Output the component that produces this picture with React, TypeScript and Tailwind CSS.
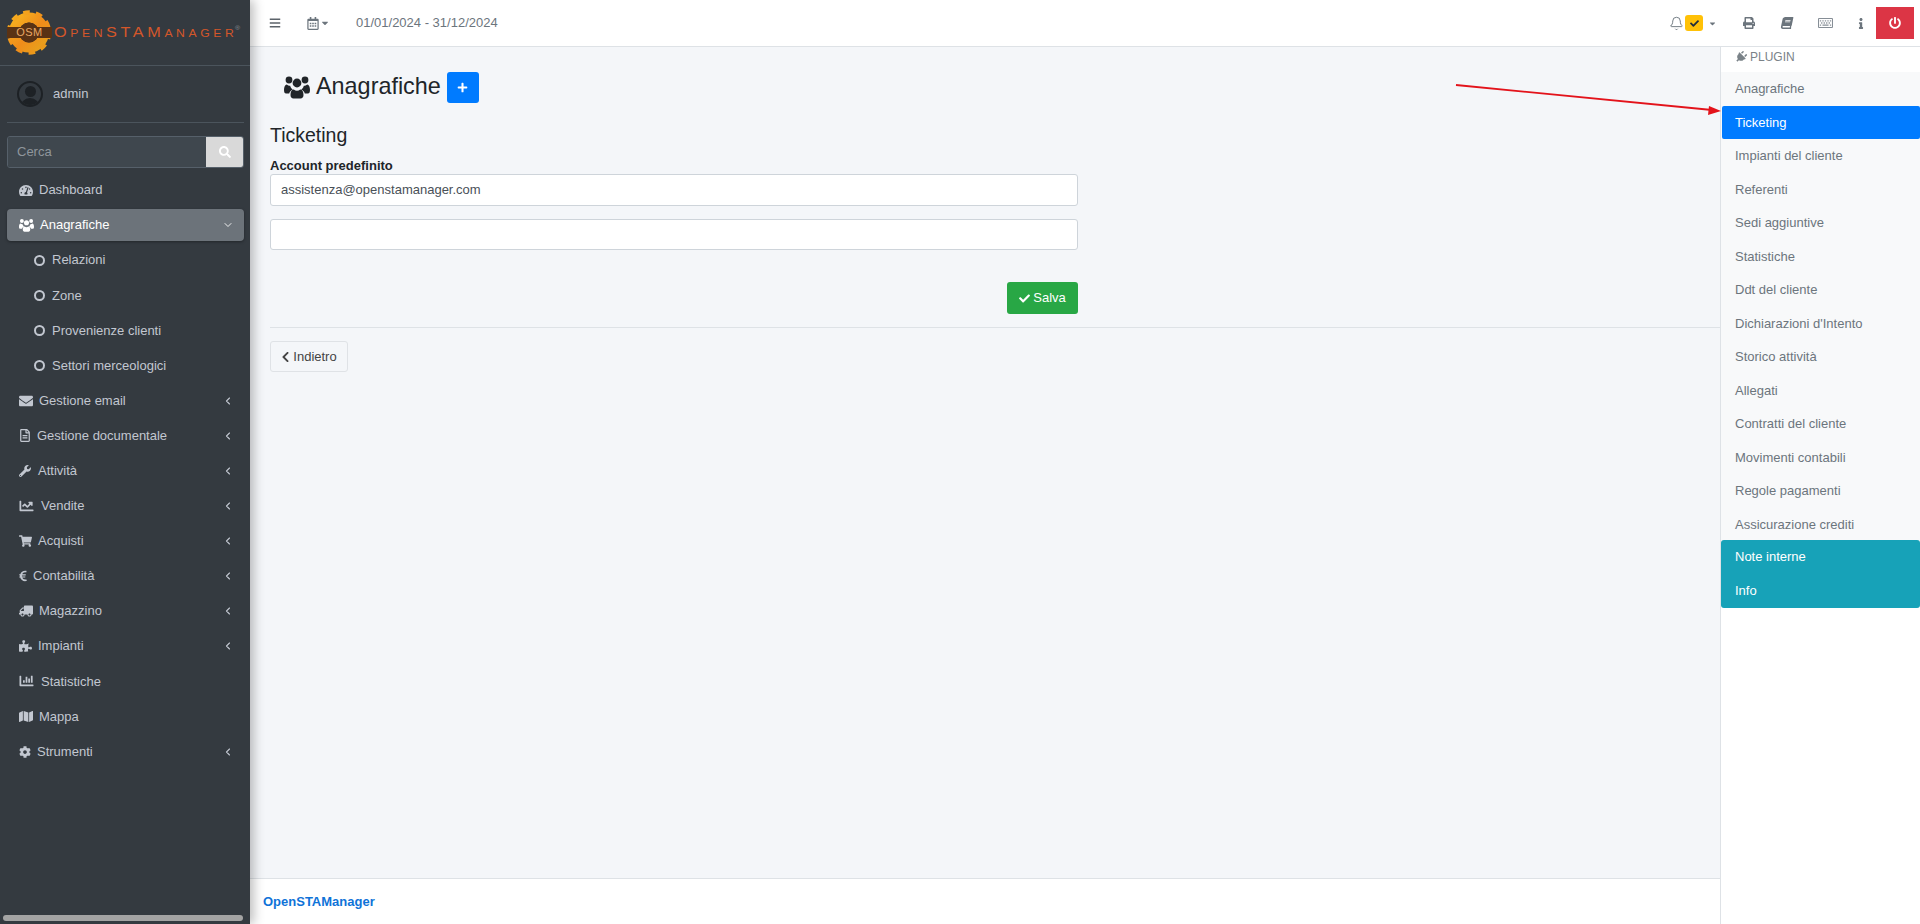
import {
  FaBars, FaBook, FaCaretDown, FaChartBar, FaChartLine, FaCheck, FaChevronLeft, FaCog, FaEnvelope, FaEuroSign,
  FaInfo, FaMap, FaPlug, FaPlus, FaPowerOff, FaPrint, FaPuzzlePiece, FaRegCalendarAlt, FaRegFileAlt,
  FaRegKeyboard, FaSearch, FaShoppingCart, FaTachometerAlt, FaTruck, FaWrench,
} from "react-icons/fa"
import { Bell, ChevronDown, ChevronLeft } from "lucide-react"

const UsersIcon = ({ className }: { className?: string }) => (
  <svg viewBox="0 0 26 24" className={className} fill="currentColor">
    <circle cx="5" cy="5" r="3.4" />
    <circle cx="21" cy="5" r="3.4" />
    <circle cx="13" cy="8" r="4.4" />
    <path d="M0 15c0-3 1-5.5 2.8-5.5.9.9 2 1.3 3.4 1.3.4 1.7 1.300 3 2.500 3.800C7 15.500 5.600 16.800 5.200 18.500H2C.8 18.500 0 17.500 0 15ZM26 15c0-3-1-5.500-2.800-5.500-.9.9-2 1.300-3.400 1.300-.4 1.700-1.300 3-2.500 3.800 1.700.9 3.100 2.200 3.500 3.900H24c1.200 0 2-1 2-3.500Z" />
    <path d="M6.500 20c0-3.500 1.200-5.500 3.300-5.500 1 .8 2 1.200 3.200 1.200s2.200-.4 3.200-1.200c2.100 0 3.300 2 3.300 5.500 0 2.200-1.200 3.500-3 3.500H9.500c-1.800 0-3-1.300-3-3.500Z" />
  </svg>
)

const Logo = () => (
  <div className="h-[66px] border-b border-[#4b545c] flex items-center pl-[7px] shrink-0">
    <div className="relative w-[45px] h-[45px] shrink-0">
      <svg viewBox="0 0 45 45" className="w-[45px] h-[45px]">
        <defs>
          <linearGradient id="gearFill" x1="0" y1="0" x2="1" y2="1">
            <stop offset="0" stopColor="#f7b11f" />
            <stop offset="0.55" stopColor="#f08c1a" />
            <stop offset="1" stopColor="#e8a21c" />
          </linearGradient>
        </defs>
        <circle cx="22" cy="22.500" r="15" fill="none" stroke="url(#gearFill)" strokeWidth="10" />
        <circle cx="22" cy="22.500" r="20" fill="none" stroke="url(#gearFill)" strokeWidth="4.500" strokeDasharray="6.500 6.060" />
        <circle cx="22" cy="22.500" r="10" fill="#5a3214" />
        <rect x="0" y="17" width="45" height="11" fill="#5a3214" />
      </svg>
      <span className="absolute inset-0 flex items-center justify-center text-[11px] leading-none tracking-[0.5px] text-[#e9a866]">OSM</span>
    </div>
    <div className="flex items-baseline text-[#d4572a] tracking-[3.100px] leading-none ml-[2px] pb-[1px] whitespace-nowrap origin-left scale-x-[1.16]">
      <span className="text-[14px]">O</span>
      <span className="text-[10.500px]">PEN</span>
      <span className="text-[14px]">STAM</span>
      <span className="text-[10.500px]">ANAGER</span>
      <span className="text-[6px] self-start text-[#8a8f94] tracking-normal -ml-[2px]">®</span>
    </div>
  </div>
)

const menu = [
  { label: "Gestione email", icon: <FaEnvelope className="w-[14px] h-[14px]" />, gap: "ml-[6px]" },
  { label: "Gestione documentale", icon: <FaRegFileAlt className="w-[12px] h-[13px]" />, gap: "ml-[6px]" },
  { label: "Attività", icon: <FaWrench className="w-[12px] h-[12px]" />, gap: "ml-[7px]" },
  { label: "Vendite", icon: <FaChartLine className="w-[15px] h-[14px]" />, gap: "ml-[7px]" },
  { label: "Acquisti", icon: <FaShoppingCart className="w-[13px] h-[12px]" />, gap: "ml-[6px]" },
  { label: "Contabilità", icon: <FaEuroSign className="w-[8px] h-[12px]" />, gap: "ml-[6px]" },
  { label: "Magazzino", icon: <FaTruck className="w-[14px] h-[12px] -scale-x-100" />, gap: "ml-[6px]" },
  { label: "Impianti", icon: <FaPuzzlePiece className="w-[13px] h-[12px]" />, gap: "ml-[6px]" },
  { label: "Statistiche", icon: <FaChartBar className="w-[15px] h-[14px]" />, gap: "ml-[7px]", leaf: true },
  { label: "Mappa", icon: <FaMap className="w-[14px] h-[13px]" />, gap: "ml-[6px]", leaf: true },
  { label: "Strumenti", icon: <FaCog className="w-[12px] h-[12px]" />, gap: "ml-[6px]" },
]

const children = ["Relazioni", "Zone", "Provenienze clienti", "Settori merceologici"]

const plugins = [
  "Anagrafiche", "Ticketing", "Impianti del cliente", "Referenti", "Sedi aggiuntive", "Statistiche", "Ddt del cliente",
  "Dichiarazioni d'Intento", "Storico attività", "Allegati", "Contratti del cliente", "Movimenti contabili",
  "Regole pagamenti", "Assicurazione crediti",
]

function Sidebar() {
  return (
    <aside className="w-[250px] shrink-0 bg-[#343a40] flex flex-col relative z-20 shadow-[4px_0_10px_rgba(0,0,0,0.25)] text-[13px] text-[#c2c7d0]">
      <Logo />
      <div className="ml-[7px] mr-[6px] h-[57px] border-b border-[#4b545c] flex items-center pl-[10px] shrink-0">
        <div className="w-[26px] h-[26px] rounded-full border-2 border-[#1d2125] bg-[#343a40] overflow-hidden relative">
          <div className="w-[11px] h-[11px] rounded-full bg-[#1d2125] mx-auto mt-[3px]" />
          <div className="w-[20px] h-[10px] rounded-t-full bg-[#1d2125] mx-auto mt-[1px]" />
        </div>
        <span className="ml-[10px] mt-[-1px]">admin</span>
      </div>
      <div className="ml-[7px] mr-[6px] mt-[13px] h-[32px] flex shrink-0 rounded-[3px] border border-[#56606a] overflow-hidden">
        <div className="flex-1 bg-[#3f474e] text-[#8f969c] pl-[9px] flex items-center">Cerca</div>
        <div className="w-[37px] bg-[#d9d9d9] text-white flex items-center justify-center"><FaSearch className="w-[12px] h-[12px]" /></div>
      </div>
      <nav className="mt-[6px] flex flex-col gap-[3.1px] pl-[7px] pr-[6px]">
        <div className="h-[32px] flex items-center pl-[12px]">
          <FaTachometerAlt className="w-[14px] h-[13px]" />
          <span className="ml-[6px]">Dashboard</span>
        </div>
        <div className="h-[32px] flex items-center pl-[12px] pr-[10px] rounded-[4px] bg-[#6c737a] text-white shadow-[0_1px_3px_rgba(0,0,0,0.35)]">
          <UsersIcon className="w-[15px] h-[14px]" />
          <span className="ml-[6px]">Anagrafiche</span>
          <ChevronDown className="ml-auto" size={12} strokeWidth={1.75} />
        </div>
        {children.map((c) => (
          <div key={c} className="h-[32px] flex items-center pl-[27px]">
            <span className="w-[11px] h-[11px] rounded-full border-2 border-[#c2c7d0]" />
            <span className="ml-[7px]">{c}</span>
          </div>
        ))}
        {menu.map((m) => (
          <div key={m.label} className="h-[32px] flex items-center pl-[12px] pr-[10px]">
            {m.icon}
            <span className={m.gap}>{m.label}</span>
            {!m.leaf && <ChevronLeft className="ml-auto" size={12} strokeWidth={2.25} />}
          </div>
        ))}
      </nav>
      <div className="mt-auto mb-[3px] ml-[3px] mr-[7px] h-[6px] rounded-full bg-[#a3a3a3]" />
    </aside>
  )
}

function Header() {
  return (
    <header className="h-[47px] shrink-0 bg-white border-b border-[#dee2e6] flex items-center text-[13px] text-[#6c757d]">
      <FaBars className="ml-[19px] w-[12px] h-[12px] text-[#5c636a]" />
      <FaRegCalendarAlt className="ml-[26px] w-[12px] h-[13px]" />
      <FaCaretDown className="ml-[1px] w-[10px] h-[10px]" />
      <span className="ml-[26px]">01/01/2024 - 31/12/2024</span>
      <div className="ml-auto flex items-center">
        <Bell size={15} strokeWidth={1.5} />
        <span className="ml-[1px] w-[18px] h-[16px] rounded-[3px] bg-[#ffc107] flex items-center justify-center text-[#1f2d3d]"><FaCheck className="w-[9px] h-[9px]" /></span>
        <FaCaretDown className="ml-[5px] w-[9px] h-[9px]" />
        <FaPrint className="ml-[26px] w-[12px] h-[12px]" />
        <FaBook className="ml-[26px] w-[12px] h-[12px] -skew-x-12" />
        <FaRegKeyboard className="ml-[25px] w-[15px] h-[14px] text-[#868e96]" />
        <FaInfo className="ml-[25px] w-[6px] h-[11px]" />
        <span className="ml-[12px] mr-[6px] w-[38px] h-[32px] bg-[#dc3545] text-white flex items-center justify-center"><FaPowerOff className="w-[12px] h-[12px]" /></span>
      </div>
    </header>
  )
}

function Content() {
  return (
    <div className="flex-1 flex flex-col min-w-0">
      <main className="flex-1 bg-[#f4f6f9] pl-[20px] text-[13px] text-[#212529]">
        <div className="flex items-center h-[40px] pl-[14px] mt-[20px]">
          <UsersIcon className="w-[26px] h-[24px] -mt-[1px]" />
          <h1 className="ml-[6px] text-[23.400px] leading-none -mt-[1px]">Anagrafiche</h1>
          <button className="ml-[6px] w-[32px] h-[31px] bg-[#007bff] rounded-[3px] text-white flex items-center justify-center">
            <FaPlus className="w-[11px] h-[11px]" />
          </button>
        </div>
        <h2 className="mt-[16px] text-[19.500px] leading-[24px]">Ticketing</h2>
        <label className="block mt-[11px] font-bold leading-[15px]">Account predefinito</label>
        <div className="w-[808px] mt-[1px]">
          <div className="h-[32px] bg-white border border-[#ced4da] rounded-[3px] pl-[10px] flex items-center text-[#495057]">assistenza@openstamanager.com</div>
          <div className="h-[31px] bg-white border border-[#ced4da] rounded-[3px] mt-[13px]" />
          <div className="flex justify-end mt-[32px]">
            <button className="w-[71px] h-[32px] rounded-[3px] bg-[#28a745] text-white flex items-center justify-center gap-[3px]">
              <FaCheck className="w-[11px] h-[11px]" />Salva
            </button>
          </div>
        </div>
        <hr className="mt-[13px] border-[#dee2e6]" />
        <button className="mt-[13px] w-[78px] h-[31px] rounded-[3px] border border-[#dfe2e6] text-[#444] flex items-center justify-center gap-[3px]">
          <FaChevronLeft className="w-[9px] h-[12px]" />Indietro
        </button>
      </main>
      <footer className="h-[46px] shrink-0 bg-white border-t border-[#dee2e6] pl-[13px] flex items-center text-[13px] font-bold text-[#0f73d8]">OpenSTAManager</footer>
    </div>
  )
}

function PluginBar() {
  return (
    <aside className="w-[199px] shrink-0 box-content border-l border-[#dee2e6] bg-white flex flex-col text-[13px] text-[#6c757d]">
      <div className="h-[25px] pl-[14px] pb-[5px] flex items-center text-[12px] text-[#7a8288]">
        <FaPlug className="w-[12px] h-[12px] mr-[3px] rotate-45" />PLUGIN
      </div>
      <div className="bg-[#f8f9fa]">
        {plugins.map((p) => (
          <div
            key={p}
            className={
              p === "Ticketing"
                ? "h-[33.5px] pl-[13px] flex items-center bg-[#007bff] text-white rounded-[2px] ml-[1px]"
                : "h-[33.5px] pl-[14px] flex items-center"
            }
          >
            {p}
          </div>
        ))}
      </div>
      <div className="bg-[#17a2b8] text-white rounded-[3px] -mt-[1px]">
        <div className="h-[34px] pl-[14px] flex items-center">Note interne</div>
        <div className="h-[34px] pl-[14px] flex items-center">Info</div>
      </div>
    </aside>
  )
}

export default function App() {
  return (
    <div className="relative w-[1920px] h-[924px] overflow-hidden flex font-['Liberation_Sans',Arial,sans-serif]">
      <Sidebar />
      <div className="flex-1 flex flex-col min-w-0">
        <Header />
        <div className="flex-1 flex min-h-0">
          <Content />
          <PluginBar />
        </div>
      </div>
      {/* annotation arrow over the page */}
      <svg className="absolute left-[1450px] top-[80px] w-[275px] h-[40px] z-30" viewBox="0 0 275 40">
        <line x1="6" y1="5" x2="262" y2="30" stroke="#e3131b" strokeWidth="1.800" />
        <polygon points="271,31 259,26 258,35" fill="#e3131b" />
      </svg>
    </div>
  )
}
